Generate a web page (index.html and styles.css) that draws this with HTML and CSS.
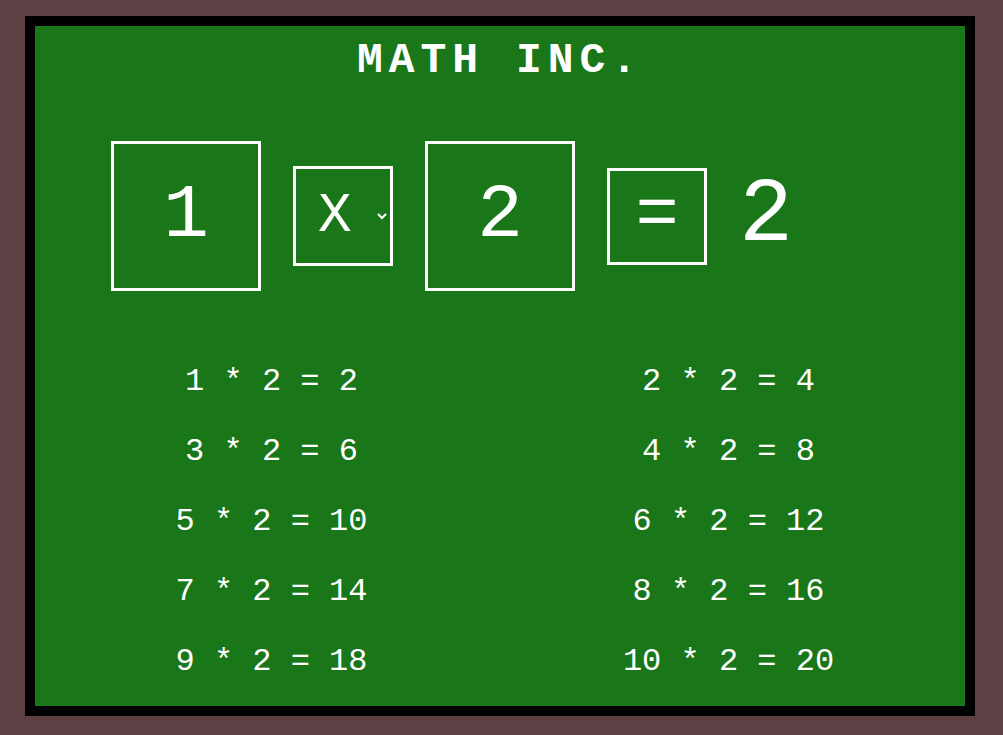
FILE: index.html
```html
<!DOCTYPE html>
<html>
<head>
<meta charset="utf-8">
<link rel="stylesheet" href="styles.css">
</head>
<body>
<div class="board">
  <h1 class="title">MATH INC.</h1>
  <div class="calc">
    <input class="num" type="text" value="1">
    <select class="op"><option>X</option></select>
    <input class="num" type="text" value="2">
    <button class="eq">=</button>
    <span class="result">2</span>
  </div>
  <div class="table">
    <div class="cell">1 * 2 = 2</div>
    <div class="cell">2 * 2 = 4</div>
    <div class="cell">3 * 2 = 6</div>
    <div class="cell">4 * 2 = 8</div>
    <div class="cell">5 * 2 = 10</div>
    <div class="cell">6 * 2 = 12</div>
    <div class="cell">7 * 2 = 14</div>
    <div class="cell">8 * 2 = 16</div>
    <div class="cell">9 * 2 = 18</div>
    <div class="cell">10 * 2 = 20</div>
  </div>
</div>
</body>
</html>
```
FILE: styles.css
```css
html, body {
  margin: 0;
  padding: 0;
}
body {
  background: #5d4044;
  padding: 16px 28px 19px 25px;
  font-family: "Liberation Mono", "Courier New", monospace;
  color: #fff;
}
.board {
  width: 930px;
  height: 680px;
  border: 10px solid #000;
  background: #197619;
  display: flex;
  flex-direction: column;
}
.title {
  margin: 11px 0 0 0;
  text-align: center;
  font-size: 43px;
  line-height: 48px;
  font-weight: bold;
  letter-spacing: 6px;
}
.calc {
  display: flex;
  align-items: center;
  gap: 32px;
  padding-left: 76px;
  margin-top: 56px;
}
.num {
  box-sizing: border-box;
  width: 150px;
  height: 150px;
  border: 3px solid #fff;
  background: transparent;
  color: #fff;
  font-family: inherit;
  font-size: 76px;
  text-align: center;
  padding: 0;
  margin: 0;
  outline: none;
}
.op {
  box-sizing: border-box;
  width: 100px;
  height: 100px;
  border: 3px solid #fff;
  border-radius: 0;
  background: transparent;
  color: #fff;
  font-family: inherit;
  font-size: 56px;
  padding: 0 0 0 18px;
  margin: 0;
}
.eq {
  box-sizing: border-box;
  width: 100px;
  height: 97px;
  border: 3px solid #fff;
  border-radius: 0;
  background: transparent;
  color: #fff;
  font-family: inherit;
  font-size: 72px;
  padding: 0;
  margin: 0;
}
.result {
  font-size: 90px;
  line-height: 100px;
}
.table {
  display: grid;
  grid-template-columns: 457px 457px;
  grid-auto-rows: 70px;
  margin: 55px 0 0 8px;
}
.cell {
  display: flex;
  align-items: center;
  justify-content: center;
  font-size: 32px;
}
```
